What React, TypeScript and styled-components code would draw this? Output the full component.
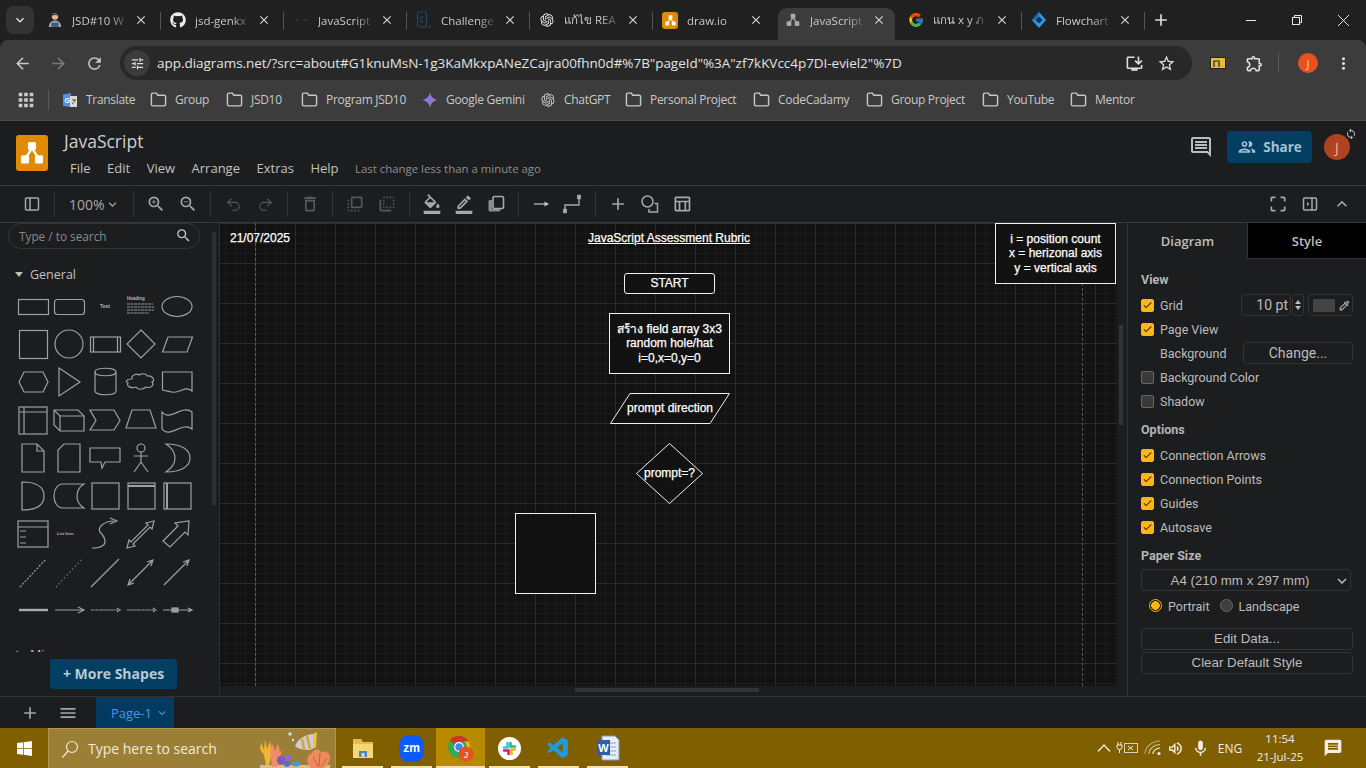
import { FC, ReactNode } from 'react';
import styled, { createGlobalStyle } from 'styled-components';
import { FaGithub, FaWindows } from 'react-icons/fa';
import { FcGoogle } from 'react-icons/fc';
import { VscVscode } from 'react-icons/vsc';
import { RiOpenaiFill } from 'react-icons/ri';
import { Undo2, Redo2 } from 'lucide-react';
import {
  MdAdd,
  MdArrowBack,
  MdArrowForward,
  MdClose,
  MdExpandLess,
  MdExpandMore,
  MdFlipToBack,
  MdFlipToFront,
  MdKeyboardArrowDown,
  MdMenu,
  MdMessage,
  MdOutlineBorderColor,
  MdOutlineComment,
  MdOutlineDelete,
  MdOutlineExtension,
  MdOutlineFormatColorFill,
  MdOutlineGroup,
  MdOutlineInstallDesktop,
  MdOutlineTableChart,
  MdMoreVert,
  MdRefresh,
  MdSearch,
  MdStarBorder,
  MdSync,
  MdTune,
  MdZoomIn,
  MdZoomOut,
  MdCheck,
  MdOutlineColorize,
  MdOutlineVolumeUp,
  MdMic,
  MdCropFree,
  MdApps,
} from 'react-icons/md';
import { FiFolder } from 'react-icons/fi';

const SANS = '"Open Sans", "Noto Sans", "Noto Sans CJK SC", sans-serif';
const ROBOTO = 'Roboto, "Open Sans", sans-serif';
const ARIAL = '"Liberation Sans", "Noto Sans CJK SC", sans-serif';

const GlobalStyle = createGlobalStyle`
  html, body {
    margin: 0;
    width: 1366px;
    height: 768px;
    overflow: hidden;
    background: #1c1d1f;
    font-family: ${SANS};
  }
  * { box-sizing: border-box; }
`;

const Screen = styled.div`
  display: flex;
  flex-direction: column;
  width: 1366px;
  height: 768px;
`;

/* browser chrome */
const TabStrip = styled.div`
  display: flex;
  align-items: flex-end;
  height: 40px;
  background: #202020;
`;

const TabCollapse = styled.div`
  display: flex;
  align-items: center;
  justify-content: center;
  width: 28px;
  height: 28px;
  margin: 0 4px 6px 6px;
  border-radius: 8px;
  background: #333;
  color: #ddd;
  font-size: 16px;
`;

const Tab = styled.div<{ $active?: boolean; $noSep?: boolean }>`
  position: relative;
  display: flex;
  align-items: center;
  width: 123px;
  height: 32px;
  padding: 0 0 8px 9px;
  color: #c9c9c9;
  font-size: 11.5px;
  &::before {
    content: '';
    display: ${(p) => (p.$active ? 'block' : 'none')};
    position: absolute;
    left: 2px;
    right: 4px;
    top: 0;
    bottom: 0;
    border-radius: 9px 9px 0 0;
    background: #3c3c3c;
  }
  &::after {
    content: '';
    display: ${(p) => (p.$active || p.$noSep ? 'none' : 'block')};
    position: absolute;
    right: 0;
    top: 4px;
    height: 18px;
    width: 1px;
    background: #555;
  }
  > * { position: relative; }
`;

const TabIcon = styled.span`
  display: flex;
  align-items: center;
  justify-content: center;
  width: 16px;
  height: 16px;
  font-size: 16px;
  color: #eee;
  flex: none;
`;

const TabTitle = styled.span`
  width: 60px;
  margin-left: 9px;
  white-space: nowrap;
  -webkit-mask-image: linear-gradient(90deg, #000 62%, transparent 96%);
  mask-image: linear-gradient(90deg, #000 62%, transparent 96%);
`;

const TabClose = styled.span`
  display: flex;
  justify-content: center;
  width: 16px;
  font-size: 14px;
  color: #d5d5d5;
  margin-left: 1px;
`;

const NewTab = styled.div`
  display: flex;
  align-items: center;
  justify-content: center;
  width: 32px;
  height: 32px;
  padding-bottom: 8px;
  color: #ddd;
  font-size: 20px;
`;

const WindowControls = styled.div`
  display: flex;
  align-self: stretch;
  margin-left: auto;
`;

const WindowButton = styled.div`
  display: flex;
  align-items: center;
  justify-content: center;
  width: 46px;
  color: #e8e8e8;
`;

const AddressRow = styled.div`
  display: flex;
  align-items: center;
  height: 40px;
  padding: 6px 5px 0 6px;
  background: #3c3c3c;
  border-radius: 8px 8px 0 0;
  color: #c7c7c7;
`;

const NavButton = styled.div<{ $dim?: boolean }>`
  display: flex;
  align-items: center;
  justify-content: center;
  width: 32px;
  margin-right: 4px;
  font-size: 19px;
  color: ${(p) => (p.$dim ? '#7a7a7a' : '#c7c7c7')};
`;

const UrlPill = styled.div`
  display: flex;
  align-items: center;
  width: 1072px;
  height: 34px;
  margin: 0 10px 0 6px;
  padding: 0 10px 0 4px;
  border-radius: 17px;
  background: #282828;
`;

const SiteInfo = styled.div`
  display: flex;
  align-items: center;
  justify-content: center;
  width: 26px;
  height: 26px;
  border-radius: 50%;
  background: #3c3c3c;
  font-size: 15px;
  color: #ddd;
`;

const UrlText = styled.div`
  flex: 1;
  margin-left: 7px;
  font-size: 13.5px;
  letter-spacing: -0.04px;
  color: #e3e3e3;
  white-space: nowrap;
`;

const PillIcon = styled.span<{ $gap?: number }>`
  display: flex;
  justify-content: center;
  width: 32px;
  margin-left: ${(p) => p.$gap ?? 0}px;
  font-size: 19px;
  color: #dedede;
`;

const Divider = styled.span`
  width: 1px;
  height: 20px;
  background: #5a5a5a;
  margin: 0 8px;
`;

const ChromeAvatar = styled.span`
  display: flex;
  align-items: center;
  justify-content: center;
  width: 20px;
  height: 20px;
  margin: 0 9px 0 11px;
  border-radius: 50%;
  background: #e8521f;
  color: #f5d5c5;
  font-size: 11px;
`;

const BookmarkBar = styled.div`
  display: flex;
  align-items: center;
  height: 41px;
  padding: 0 0 1px 16px;
  background: #3c3c3c;
  color: #c9c9c9;
  font-size: 12px;
  letter-spacing: -0.3px;
  border-bottom: 1px solid #4a4a4a;
`;

const AppsIcon = styled.span`
  display: flex;
  font-size: 22px;
  margin-left: -1px;
  color: #c9c9c9;
`;

const BookmarkDivider = styled.span`
  width: 1px;
  height: 20px;
  background: #5a5a5a;
  margin: 0 13px 0 11px;
`;

const Bookmark = styled.div<{ $w: number }>`
  display: flex;
  align-items: center;
  gap: 8px;
  width: ${(p) => p.$w}px;
  white-space: nowrap;
  svg { flex: none; }
`;

/* draw.io header */
const AppHeader = styled.div`
  display: flex;
  height: 65px;
  padding: 14px 16px 0 16px;
  background: #1c1d1f;
  border-bottom: 1px solid #3a3a3a;
`;

const Logo = styled.div`
  display: flex;
  align-items: center;
  justify-content: center;
  width: 32px;
  height: 36px;
  border-radius: 3px;
  background: #e08a05;
`;

const TabLogo = styled(Logo)`
  width: 16px;
  height: 17px;
`;

const TitleBlock = styled.div`
  margin-left: 16px;
  margin-top: -7px;
`;

const DocTitle = styled.div`
  font-size: 17.5px;
  line-height: 26px;
  color: #cfcfcf;
`;

const MenuBar = styled.div`
  display: flex;
  align-items: center;
  height: 26px;
  margin-left: 6px;
  margin-top: 1px;
  gap: 16.5px;
  font-size: 13px;
  color: #c2c2c2;
`;

const LastChange = styled.span`
  font-size: 11.4px;
  color: #8f8f8f;
`;

const HeaderRight = styled.div`
  display: flex;
  align-items: flex-start;
  margin: -1px 0 0 auto;
  color: #bdbdbd;
`;

const CommentIcon = styled.span`
  display: flex;
  font-size: 24px;
  margin: 1px 14px 0 0;
`;

const ShareButton = styled.div`
  display: flex;
  align-items: center;
  justify-content: center;
  gap: 6px;
  width: 85px;
  height: 32px;
  margin-top: -3px;
  border-radius: 4px;
  background: #033e63;
  color: #a8c0d2;
  font-size: 13.5px;
  font-weight: 700;
`;

const Avatar = styled.div`
  position: relative;
  display: flex;
  align-items: center;
  justify-content: center;
  width: 26px;
  height: 26px;
  margin-left: 12px;
  border-radius: 50%;
  background: #b0431f;
  color: #e8b8a0;
  font-size: 14px;
  svg {
    position: absolute;
    top: -6px;
    right: -7px;
    color: #bbb;
  }
`;

const Toolbar = styled.div`
  display: flex;
  align-items: center;
  height: 37px;
  padding-left: 16px;
  background: #1c1d1f;
  border-bottom: 1px solid #3a3a3a;
  color: #a8a8a8;
`;

const ToolButton = styled.div<{ $dim?: boolean }>`
  display: flex;
  align-items: center;
  justify-content: center;
  width: 32px;
  height: 32px;
  font-size: 20px;
  color: ${(p) => (p.$dim ? '#585858' : '#a8a8a8')};
`;

const ToolSep = styled.span`
  width: 1px;
  height: 26px;
  margin: 0 6px;
  background: #333;
`;

const ZoomControl = styled.div`
  display: flex;
  align-items: center;
  width: 66px;
  padding-left: 8px;
  font-size: 14px;
  color: #a8a8a8;
  white-space: nowrap;
`;

const ToolSpacer = styled.div`
  margin-left: auto;
  display: flex;
  padding-right: 8px;
`;

/* main area */
const Main = styled.div`
  display: flex;
  flex: 1;
  min-height: 0;
`;

const Sidebar = styled.aside`
  position: relative;
  display: flex;
  flex-direction: column;
  width: 220px;
  background: #1c1d1f;
  border-right: 1px solid #2d2d2d;
`;

const SidebarThumb = styled.div`
  position: absolute;
  left: 212px;
  top: 9px;
  width: 4px;
  height: 273px;
  background: #2f2f2f;
`;

const SearchBox = styled.div`
  display: flex;
  align-items: center;
  justify-content: space-between;
  width: 192px;
  height: 26px;
  margin: 0 0 0 8px;
  padding: 0 7px 1px 10px;
  border: 1px solid #333;
  border-radius: 13px;
  font-size: 11.8px;
  color: #8a8a8a;
  svg { color: #c0c0c0; }
`;

const PaletteScroll = styled.div`
  flex: 1;
  min-height: 0;
  overflow: hidden;
  padding-left: 15px;
`;

const SectionHead = styled.div`
  display: flex;
  align-items: center;
  height: 22px;
  gap: 7px;
  font-size: 12.5px;
  color: #c0c0c0;
`;

const Caret = styled.span<{ $closed?: boolean }>`
  width: 0;
  height: 0;
  border-left: 4.5px solid transparent;
  border-right: 4.5px solid transparent;
  border-top: 5px solid #c0c0c0;
  transform: ${(p) => (p.$closed ? 'rotate(-90deg)' : 'none')};
`;

const GeneralHead = styled(SectionHead)`
  margin-top: 14px;
`;

const MiscHead = styled(SectionHead)`
  margin-top: 14px;
`;

const PaletteGrid = styled.div`
  display: grid;
  grid-template-columns: repeat(5, 36px);
  grid-auto-rows: 38px;
  margin-top: 2px;
`;

const ShapeSvg = styled.svg`
  display: block;
  width: 36px;
  height: 38px;
  fill: none;
  stroke: #a0a0a0;
  stroke-width: 1.2;
  text {
    fill: #b5b5b5;
    stroke: none;
    font-family: ${ARIAL};
  }
`;

const SidebarFoot = styled.div`
  display: flex;
  height: 44px;
  padding: 7px 0 0 50px;
  background: #1c1d1f;
`;

const MoreShapes = styled.div`
  display: flex;
  align-items: center;
  justify-content: center;
  gap: 4px;
  width: 127px;
  height: 30px;
  padding-bottom: 1px;
  border-radius: 3px;
  background: #033e63;
  color: #b9c9d4;
  font-size: 14px;
  font-weight: 700;
`;

const CanvasColumn = styled.div`
  display: flex;
  flex-direction: column;
  width: 907px;
`;

const CanvasRow = styled.div`
  display: flex;
  flex: 1;
  min-height: 0;
`;

const Canvas = styled.div`
  position: relative;
  flex: 1;
  overflow: hidden;
  background-color: #121212;
  background-image:
    linear-gradient(#2b2b2b 1px, transparent 1px),
    linear-gradient(90deg, #2b2b2b 1px, transparent 1px),
    linear-gradient(#1b1b1b 1px, transparent 1px),
    linear-gradient(90deg, #1b1b1b 1px, transparent 1px);
  background-size: 40px 40px, 40px 40px, 10px 10px, 10px 10px;
  background-position: 0 0, 35px 0, 0 0, 5px 0;
`;

const VGutter = styled.div`
  position: relative;
  width: 10px;
  background: #1c1d1f;
`;

const VThumb = styled.div`
  position: absolute;
  left: 2px;
  top: 102px;
  width: 4px;
  height: 100px;
  background: #333;
`;

const HGutter = styled.div`
  position: relative;
  height: 10px;
  background: #1c1d1f;
`;

const HThumb = styled.div`
  position: absolute;
  left: 355px;
  top: 2px;
  width: 184px;
  height: 4px;
  background: #333;
`;

const PageBreak = styled.div<{ $x: number }>`
  position: absolute;
  left: ${(p) => p.$x}px;
  top: 0;
  bottom: 0;
  border-left: 1px dashed #5a5a5a;
`;

const Node = styled.div<{ $x: number; $y: number; $w: number; $h: number; $box?: boolean; $radius?: number }>`
  position: absolute;
  left: ${(p) => p.$x}px;
  top: ${(p) => p.$y}px;
  width: ${(p) => p.$w}px;
  height: ${(p) => p.$h}px;
  display: flex;
  align-items: center;
  justify-content: center;
  text-align: center;
  font-family: ${ARIAL};
  font-size: 12px;
  line-height: 14.4px;
  color: #fff;
  white-space: nowrap;
  -webkit-text-stroke: 0.25px #fff;
  border: ${(p) => (p.$box ? '1px solid #f0f0f0' : 'none')};
  border-radius: ${(p) => p.$radius ?? 0}px;
  background: ${(p) => (p.$box ? '#121212' : 'transparent')};
`;

const NodeOutline = styled.svg`
  position: absolute;
  inset: 0;
  width: 100%;
  height: 100%;
  fill: #121212;
  stroke: #f0f0f0;
`;

const NodeLabel = styled.span<{ $underline?: boolean }>`
  position: relative;
  text-decoration: ${(p) => (p.$underline ? 'underline' : 'none')};
`;

/* format panel */
const Panel = styled.aside`
  width: 239px;
  background: #1c1d1f;
  border-left: 1px solid #333;
  color: #bcbcbc;
  font-family: ${ROBOTO};
  font-size: 12.5px;
`;

const PanelTabs = styled.div`
  display: flex;
  height: 36px;
`;

const PanelTab = styled.div<{ $active?: boolean }>`
  display: flex;
  align-items: center;
  justify-content: center;
  width: 119px;
  font-family: ${SANS};
  font-size: 13px;
  font-weight: 600;
  color: #bdbdbd;
  background: ${(p) => (p.$active ? '#1c1d1f' : '#000')};
  border-left: ${(p) => (p.$active ? 'none' : '1px solid #333')};
  border-bottom: ${(p) => (p.$active ? 'none' : '1px solid #333')};
`;

const PanelBody = styled.div`
  padding: 9px 13px 0 13px;
`;

const PanelHeading = styled.div<{ $gap?: number; $after?: number }>`
  height: 24px;
  margin-top: ${(p) => p.$gap ?? 0}px;
  margin-bottom: ${(p) => p.$after ?? 0}px;
  line-height: 24px;
  font-size: 12.5px;
  font-weight: 700;
  color: #b5b5b5;
`;

const OptionRow = styled.div`
  display: flex;
  align-items: center;
  gap: 6px;
  height: 24px;
  white-space: nowrap;
`;

const CheckBox = styled.span<{ $on?: boolean }>`
  display: flex;
  align-items: center;
  justify-content: center;
  width: 13px;
  height: 13px;
  border-radius: 2px;
  background: ${(p) => (p.$on ? '#fbb813' : '#3a3a3a')};
  border: 1px solid ${(p) => (p.$on ? '#fbb813' : '#666')};
  color: #222;
  font-size: 12px;
`;

const GridSize = styled.div`
  display: flex;
  align-items: center;
  height: 22px;
  margin-left: auto;
`;

const SizeInput = styled.div`
  width: 50px;
  height: 22px;
  padding-right: 2px;
  border: 1px solid #333;
  border-radius: 4px;
  text-align: right;
  line-height: 20px;
  font-size: 14px;
`;

const Stepper = styled.div`
  display: flex;
  flex-direction: column;
  align-items: center;
  justify-content: center;
  gap: 2px;
  width: 12px;
  height: 22px;
  margin: 0 4px 0 1px;
  border: 1px solid #333;
  border-radius: 3px;
`;

const StepArrow = styled.span<{ $down?: boolean }>`
  width: 0;
  height: 0;
  border-left: 3.5px solid transparent;
  border-right: 3.5px solid transparent;
  border-${(p) => (p.$down ? 'top' : 'bottom')}: 4px solid #bbb;
`;

const ColorButton = styled.div`
  display: flex;
  align-items: center;
  gap: 3px;
  width: 45px;
  height: 22px;
  padding-left: 4px;
  border: 1px solid #333;
  border-radius: 4px;
  color: #aaa;
  font-size: 13px;
`;

const Swatch = styled.span`
  width: 22px;
  height: 13px;
  background: #444;
`;

const BackgroundRow = styled(OptionRow)`
  padding-left: 19px;
  justify-content: space-between;
`;

const ChangeButton = styled.div`
  width: 110px;
  height: 22px;
  border: 1px solid #333;
  border-radius: 4px;
  text-align: center;
  line-height: 20px;
  font-size: 14px;
`;

const PaperSelect = styled.div`
  display: flex;
  align-items: center;
  justify-content: center;
  position: relative;
  width: 210px;
  height: 22px;
  margin-top: 1px;
  border: 1px solid #333;
  border-radius: 4px;
  padding-right: 12px;
  font-family: ${ARIAL};
  font-size: 13.3px;
  svg {
    position: absolute;
    right: -1px;
    top: 2px;
  }
`;

const RadioRow = styled.div`
  display: flex;
  align-items: center;
  height: 25px;
  margin-top: 3px;
  padding-left: 8px;
  font-size: 12.5px;
`;

const Radio = styled.span<{ $on?: boolean }>`
  width: 13px;
  height: 13px;
  margin: -3px 6px 0 0;
  border-radius: 50%;
  border: ${(p) => (p.$on ? '1.5px solid #fbb813' : '1px solid #666')};
  background: ${(p) => (p.$on ? 'radial-gradient(#fbb813 52%, #1c1d1f 58%)' : '#3f3f3f')};
`;

const RadioLabel = styled.span`
  margin-right: 10px;
`;

const PanelButton = styled.div`
  width: 212px;
  height: 22px;
  margin-bottom: 2px;
  border: 1px solid #333;
  border-radius: 4px;
  text-align: center;
  line-height: 20px;
  font-family: ${ARIAL};
  font-size: 13.3px;
  color: #bcbcbc;
`;

const ButtonStack = styled.div`
  margin-top: 9px;
`;

/* bottom bars */
const PageBar = styled.div`
  display: flex;
  height: 32px;
  padding-left: 14px;
  background: #1c1d1f;
  border-top: 1px solid #333;
  color: #a5a5a5;
`;

const PageBarButton = styled.div`
  display: flex;
  align-items: center;
  justify-content: center;
  width: 32px;
  margin-right: 6px;
  font-size: 20px;
`;

const PageTab = styled.div`
  display: flex;
  align-items: center;
  justify-content: flex-end;
  gap: 3px;
  width: 78px;
  margin-left: 6px;
  padding-right: 5px;
  background: #033a5f;
  color: #4d95e0;
  font-size: 13px;
`;

const Taskbar = styled.div`
  display: flex;
  align-items: stretch;
  height: 40px;
  background: #7f5f00;
  color: #fff;
`;

const StartButton = styled.div`
  display: flex;
  align-items: center;
  justify-content: center;
  width: 48px;
  font-size: 17px;
`;

const TaskSearch = styled.div`
  position: relative;
  display: flex;
  align-items: center;
  width: 288px;
  padding-left: 12px;
  background: #9c7f36;
  border: 1px solid #b09650;
  border-bottom: none;
  overflow: hidden;
  font-size: 14px;
  color: #f2ead8;
`;

const SearchArt = styled.svg`
  position: absolute;
  right: 0;
  top: 0;
  width: 80px;
  height: 40px;
`;

const SearchGlass = styled.svg`
  flex: none;
  width: 18px;
  height: 20px;
  margin-right: 9px;
  fill: none;
  stroke: #f2ead8;
  stroke-width: 1.2;
`;

const TaskApp = styled.div<{ $active?: boolean; $running?: boolean }>`
  position: relative;
  display: flex;
  align-items: center;
  justify-content: center;
  width: 49px;
  background: ${(p) => (p.$active ? '#b88a00' : 'transparent')};
  &::after {
    content: '';
    display: ${(p) => (p.$running ? 'block' : 'none')};
    position: absolute;
    left: ${(p) => (p.$active ? 0 : 4)}px;
    right: ${(p) => (p.$active ? 0 : 4)}px;
    bottom: 0;
    height: 2px;
    background: #f3e3b0;
  }
`;

const TaskApps = styled.div`
  display: flex;
  margin-left: 2px;
`;

const ZoomBadge = styled.span`
  display: flex;
  align-items: center;
  justify-content: center;
  width: 25px;
  height: 27px;
  border-radius: 10px;
  background: #0b5cff;
  font-family: ${ARIAL};
  font-weight: 700;
  font-size: 12px;
  color: #fff;
`;

const SlackBadge = styled.span`
  display: flex;
  align-items: center;
  justify-content: center;
  width: 23px;
  height: 23px;
  border-radius: 50%;
  background: #fff;
`;

const Tray = styled.div`
  display: flex;
  align-items: center;
  margin-left: auto;
  padding-right: 5px;
  font-size: 12px;
  color: #f3eee0;
`;

const TrayIcon = styled.span<{ $w: number }>`
  display: flex;
  align-items: center;
  justify-content: center;
  width: ${(p) => p.$w}px;
  font-size: 17px;
`;

const Clock = styled.div`
  width: 50px;
  text-align: center;
  line-height: 18px;
  font-size: 11.5px;
  white-space: nowrap;
`;

const Lang = styled.span`
  width: 28px;
  margin-right: 11px;
  text-align: center;
`;

/* drawings */
const DrawioMark: FC<{ size: number; color?: string }> = ({ size, color = '#fff' }) => (
  <svg width={size} height={size} viewBox="0 0 24 24">
    <path d="M12 8 6 17M12 8l6 9" stroke={color} strokeWidth="2" fill="none" />
    <rect x="8.500" y="2.500" width="7" height="7" rx="1.300" fill={color} />
    <rect x="2.500" y="14" width="7" height="7" rx="1.300" fill={color} />
    <rect x="14.500" y="14" width="7" height="7" rx="1.300" fill={color} />
  </svg>
);

const FolderIcon = () => <FiFolder size={17} color="#c9c9c9" />;

const GeminiIcon = () => (
  <svg width="16" height="16" viewBox="0 0 16 16">
    <defs>
      <linearGradient id="gem" x1="0" y1="0" x2="1" y2="1">
        <stop offset="0" stopColor="#4c8df6" />
        <stop offset="0.6" stopColor="#9b72cb" />
        <stop offset="1" stopColor="#e8604c" />
      </linearGradient>
    </defs>
    <path d="M8 0c.6 4.400 3.400 7.300 8 8-4.600.7-7.400 3.600-8 8-.6-4.400-3.400-7.300-8-8 4.600-.7 7.400-3.600 8-8Z" fill="url(#gem)" />
  </svg>
);

const TranslateIcon = () => (
  <svg width="16" height="16" viewBox="0 0 16 16">
    <path d="M1 2.500 9 1v14l-8-1Z" fill="#4c8df6" />
    <path d="M8 4h7v11H8Z" fill="#d8d8d8" />
    <path d="M10 8h4M12 7v1M13 8c-.5 2-1.500 3-3 4" stroke="#555" fill="none" />
    <text x="2.600" y="10.500" fontSize="7" fontFamily={ARIAL} fill="#fff" fontWeight="700">G</text>
  </svg>
);

const PersonIcon = () => (
  <svg width="18" height="18" viewBox="0 0 18 18">
    <circle cx="9" cy="5" r="3.600" fill="#e3b48f" />
    <path d="M5 4.500C5 1 13 1 13 4.500 11 3 7 3 5 4.500Z" fill="#2b2b2b" />
    <path d="M2 17c0-5 3-7.500 7-7.500s7 2.500 7 7.500Z" fill="#8fa9bd" />
    <rect x="5" y="12" width="8" height="5" fill="#4d5c68" />
  </svg>
);

const CodeTabIcon = () => (
  <svg width="16" height="18" viewBox="0 0 16 18" fill="none" stroke="#1f4a6b" strokeWidth="1.200">
    <rect x="1.500" y="1" width="9" height="15" rx="2" />
    <path d="M7.500 6H5v5h2.500" />
    <path d="M12 16h3" />
  </svg>
);

const DashTabIcon = () => (
  <svg width="16" height="16" viewBox="0 0 16 16" stroke="#1f4a6b" strokeWidth="1.200">
    <path d="M2 8h4M10 8h4" />
  </svg>
);

const FlowchartIcon = () => (
  <svg width="18" height="18" viewBox="0 0 18 18">
    <path d="M9 0 17 9 9 18 1 9Z" fill="#2f97e8" />
    <path d="M9 5 13 9 9 13 5 9Z" fill="#0d2f4a" />
    <path d="M9 0 4 5.500 1 9h3l5-5Z" fill="#1667b8" />
  </svg>
);

const ShadowIcon = () => (
  <svg width="20" height="20" viewBox="0 0 20 20" fill="none" stroke="currentColor">
    <rect x="7" y="2.500" width="10.500" height="12" rx="1.500" strokeWidth="1.600" />
    <path d="M3 6h3v9h8.500v1A1.500 1.500 0 0 1 13 17.500H4A1.500 1.500 0 0 1 2.500 16V7.500Z" fill="currentColor" stroke="none" opacity=".8" />
  </svg>
);

const WaypointIcon = () => (
  <svg width="20" height="20" viewBox="0 0 20 20" fill="none" stroke="currentColor" strokeWidth="1.400">
    <path d="M2 17v-6h14V4" />
    <rect x="0.800" y="15.500" width="2.400" height="3" fill="currentColor" />
    <rect x="14.800" y="1.500" width="2.400" height="3" fill="currentColor" />
  </svg>
);

const ArrowIcon = () => (
  <svg width="20" height="20" viewBox="0 0 20 20" fill="#c5c5c5">
    <path d="M3 9.400h11v1.200H3z" />
    <path d="M13.500 7.500 18 10l-4.500 2.500Z" />
  </svg>
);

const ShapesIcon = () => (
  <svg width="20" height="20" viewBox="0 0 20 20" fill="none" stroke="currentColor" strokeWidth="1.500">
    <circle cx="7.500" cy="7.500" r="5.500" />
    <path d="M14.500 9.500H17.500V18H9v-3" />
  </svg>
);

const LeftPanelIcon = () => (
  <svg width="16" height="16" viewBox="0 0 16 16" fill="none" stroke="currentColor" strokeWidth="1.500">
    <rect x="1.500" y="2" width="13" height="12" rx="1" />
    <path d="M6 2v12" />
  </svg>
);

const RightPanelIcon = () => (
  <svg width="16" height="16" viewBox="0 0 16 16" fill="none" stroke="currentColor" strokeWidth="1.500">
    <rect x="1.500" y="2" width="13" height="12" rx="1" />
    <path d="M10 2v12" />
    <path d="M5 6v4l2.500-2Z" fill="currentColor" stroke="none" />
  </svg>
);

const ExplorerIcon = () => (
  <svg width="24" height="24" viewBox="0 0 24 24">
    <path d="M2 3h8l2 3h10v3H2Z" fill="#e9b949" />
    <path d="M2 8h20v14H2Z" fill="#f7d774" />
    <rect x="8" y="15" width="8" height="6" fill="#3b8bd0" />
    <rect x="10.500" y="17" width="3" height="4" fill="#f7d774" />
  </svg>
);

const ChromeIcon = () => (
  <svg width="28" height="28" viewBox="0 0 28 28">
    <circle cx="12" cy="13" r="11" fill="#3aa757" />
    <path d="M12 2a11 11 0 0 1 9.500 5.500H12a5.500 5.500 0 0 0-5 3L3 6a11 11 0 0 1 9-4Z" fill="#d93025" />
    <path d="M21.500 7.500a11 11 0 0 1-8.500 16.500l4-7a5.500 5.500 0 0 0 0-9.500Z" fill="#fbbc04" />
    <circle cx="12" cy="13" r="4.300" fill="#4285f4" stroke="#fff" strokeWidth="1.200" />
    <circle cx="19" cy="20" r="7.500" fill="#e8521f" />
    <text x="19" y="23.500" textAnchor="middle" fontSize="9" fontFamily={ARIAL} fill="#fff">J</text>
  </svg>
);

const WordIcon = () => (
  <svg width="24" height="26" viewBox="0 0 24 26">
    <path d="M6 1h13l4 4v20H6Z" fill="#e8eef6" stroke="#7d9cc7" />
    <path d="M10 8h10M10 12h10M10 16h10M10 20h10" stroke="#8aa7cf" />
    <rect x="1" y="5" width="13" height="15" fill="#2b5fa8" />
    <text x="7.500" y="16.500" textAnchor="middle" fontSize="11" fontFamily={ARIAL} fontWeight="700" fill="#fff">W</text>
  </svg>
);

const SlackIcon = () => (
  <svg width="15" height="15" viewBox="0 0 15 15" strokeWidth="2.600" strokeLinecap="round" fill="none">
    <path d="M5.500 2v4.500H2" stroke="#36c5f0" />
    <path d="M13 5.500H8.500V2" stroke="#2eb67d" />
    <path d="M9.500 13V8.500H13" stroke="#ecb22e" />
    <path d="M2 9.500h4.500V13" stroke="#e01e5a" />
  </svg>
);

const ExtensionChip = () => (
  <svg width="16" height="12" viewBox="0 0 16 12">
    <rect x="0.500" y="0.500" width="15" height="11" fill="#e8bb3a" stroke="#222" />
    <path d="M4 10V4h5v6M4 4h2" stroke="#222" strokeWidth="1.200" fill="none" />
  </svg>
);

const BatteryIcon = () => (
  <svg width="24" height="14" viewBox="0 0 24 14" fill="none" stroke="#f3eee0">
    <path d="M2 1v3M5 1v3M1 4h5v2a2 2 0 0 1-5 0ZM3.500 8v4" />
    <rect x="8.500" y="2.500" width="13" height="9" opacity="0.800" />
    <path d="M12 5l5 4M17 5l-5 4" />
  </svg>
);

const WifiFan = () => (
  <svg width="18" height="16" viewBox="0 0 18 16" fill="none" stroke="#f3eee0" strokeWidth="1.100">
    <path d="M1 14C1 7 8 1 16 1" opacity=".55" />
    <path d="M5 14c0-5 5-9.500 11-9.500" opacity=".7" />
    <path d="M9 14c0-3 3-6 7-6" />
    <circle cx="15" cy="13.500" r="1.600" fill="#f3eee0" stroke="none" />
  </svg>
);

const TrayChevron = () => (
  <svg width="14" height="8" viewBox="0 0 14 8" fill="none" stroke="#f3eee0" strokeWidth="1.200">
    <path d="M1 7.500 7 1l6 6.500" />
  </svg>
);

const CoralArt = () => (
  <SearchArt viewBox="0 0 80 40">
    <path d="M5 36h70v4H5Z" fill="#e8c9a8" opacity=".8" />
    <path d="M11 36 9 26 5 20l1-7 3 8 1-11 2 10 3-8 1 8 3-3-3 10-2 9Z" fill="#f2b632" />
    <path d="M17 38 15 24l2-11 3 9 3-8 2 9 2-2-3 11-2 6Z" fill="#ef8c6a" />
    <circle cx="26" cy="31" r="4" fill="#7e57c2" />
    <circle cx="33" cy="29" r="3" fill="#8e6ad2" />
    <circle cx="32" cy="35" r="3" fill="#5e6ad2" />
    <ellipse cx="41" cy="35" rx="4" ry="2.500" fill="#3d9bd8" />
    <path d="M40 17c3-7 9-11 18-12l3 13-6 3c-6 0-12-1-15-4Z" fill="#c7cfd6" />
    <path d="M47 10l2 10M52 7l3 13" stroke="#e0a030" strokeWidth="2.500" />
    <path d="M58 5l4-2-1 15-3 1Z" fill="#f0c040" />
    <circle cx="35" cy="5" r="1.800" fill="#bfe3ee" />
    <circle cx="38" cy="11" r="1.200" fill="#bfe3ee" />
    <path d="M56 39c-5-5-5-12 1-15 1-4 7-5 9-1 5-2 10 2 9 7-1 4-3 7-6 9Z" fill="#ee8a5e" />
    <path d="M65 24l-1 14M58 28l5 9M72 29l-6 9" stroke="#c9623d" strokeWidth="1" />
  </SearchArt>
);

const shapes: ReactNode[] = [
  <rect x="3.500" y="12.500" width="30" height="15" />,
  <rect x="3.500" y="12.500" width="30" height="15" rx="3" />,
  <text x="18" y="21" textAnchor="middle" fontSize="5" fontWeight="700">Text</text>,
  <g>
    <text x="4" y="13" fontSize="4.500" fontWeight="700">Heading</text>
    <path d="M4 17h26M4 20h28M4 23h27M4 26h22" strokeDasharray="3 .5" strokeWidth=".9" />
  </g>,
  <ellipse cx="18" cy="19.500" rx="15" ry="10" />,

  <rect x="4.500" y="5.500" width="28" height="28" />,
  <circle cx="18" cy="19" r="14" />,
  <g>
    <rect x="3.500" y="12" width="30" height="15" />
    <path d="M6.500 12v15M30.500 12v15" />
  </g>,
  <path d="M18 5 32 19 18 33 4 19Z" />,
  <path d="M3.500 27 9 12h24.500L28 27Z" />,

  <path d="M4 19 9 9h19l5 10-5 10H9Z" />,
  <path d="M8 5 29 19 8 33Z" />,
  <path d="M8 9c0-5 21-5 21 0v19c0 5-21 5-21 0ZM8 9c0 5 21 5 21 0" />,
  <path d="M9 16c-1-4 5-6 7-4 3-2 8-1 8 1 5-1 9 4 5 6 3 3-2 7-6 5-3 3-8 3-10 0-5 2-10-1-8-4-3-1-2-4 4-4Z" />,
  <path d="M3.500 9H33v19c-8-6-12 3-20 1-4-1-6-1-9.500-2Z" />,

  <g>
    <rect x="4" y="6" width="28" height="27" />
    <path d="M9 6v27M4 11h28" />
  </g>,
  <g>
    <path d="M3 9h24l6 6v15H9l-6-6Z" />
    <path d="M3 9l6 6h24M9 15v15" />
  </g>,
  <path d="M3 9h24l6 10.500L27 29H3l6-9.500Z" />,
  <path d="M3 27 9 9h18l6 18Z" />,
  <path d="M3 11c8 10 20-8 30 0v17c-10-8-22 10-30 0Z" />,

  <g>
    <path d="M7 5h15l7 7v21H7Z" />
    <path d="M22 5v7h7" />
  </g>,
  <path d="M13 5h16v28H7V11Z" />,
  <path d="M3 9h30v14H18l-3 6-1-6H3Z" />,
  <g>
    <circle cx="18" cy="9" r="4" />
    <path d="M18 13v10M11 17h14M18 23l-7 10M18 23l7 10" />
  </g>,
  <path d="M7 5c16 0 24 6 24 14s-8 14-24 14c6-4 9-9 9-14S13 9 7 5Z" />,

  <path d="M7 5c16 0 22 6 22 14S23 33 7 33Z" />,
  <path d="M12 7h21c-5 3-7 7-7 12s2 9 7 12H12C6 31 3 25 3 19S6 7 12 7Z" />,
  <rect x="5" y="6" width="27" height="26" />,
  <g>
    <rect x="5" y="6" width="27" height="26" />
    <path d="M5 9h27" strokeWidth="2" />
  </g>,
  <g>
    <rect x="5" y="6" width="27" height="26" />
    <path d="M8 6v26" strokeWidth="2" />
  </g>,

  <g>
    <rect x="3" y="6" width="30" height="26" />
    <path d="M3 12h30M5 16h6M5 22h6M5 28h6" />
  </g>,
  <text x="6" y="20" fontSize="4" fontWeight="700">List Item</text>,
  <path d="M5 33c20 0 12-12 8-16 -3-6 6-11 14-11M23 3l7 3-7 3" />,
  <path d="M4 33l2-8 2 2 17-17-2-2 8-2-2 8-2-2L10 29l2 2Z" />,
  <path d="M4 26l15-15-3-3 14-2-1 14-3-3L11 32Z" />,

  <path d="M5 34 31 6" strokeDasharray="2 1.500" />,
  <path d="M5 34 31 6" strokeDasharray="1 3" />,
  <path d="M4 34 32 6" />,
  <path d="M5 32 30 7M24 9l6-2-2 6M11 30l-6 2 2-6" />,
  <path d="M5 32 30 7M24 9l6-2-2 6" />,

  <path d="M4 19h29" strokeWidth="2.400" stroke="#aaa" />,
  <path d="M4 19h29M27 16l6 3-6 3" />,
  <path d="M4 19h29M30 17l3 2-3 2" strokeDasharray="2 .5" />,
  <path d="M4 19h29M30 17l3 2-3 2" strokeDasharray="2 .5" />,
  <g>
    <path d="M4 19h29M29 17l4 2-4 2" />
    <rect x="13" y="17" width="6" height="4" fill="#9c9c9c" />
  </g>,
];

const tabs: { title: string; icon: ReactNode; noSep?: boolean; active?: boolean }[] = [
  { title: 'JSD#10 W', icon: <PersonIcon /> },
  { title: 'jsd-genkx', icon: <FaGithub /> },
  { title: 'JavaScript', icon: <DashTabIcon /> },
  { title: 'Challenge', icon: <CodeTabIcon /> },
  { title: 'แก้ไข REA', icon: <RiOpenaiFill /> },
  { title: 'draw.io', icon: <TabLogo><DrawioMark size={13} /></TabLogo>, noSep: true },
  { title: 'JavaScript', icon: <DrawioMark size={16} color="#aaa" />, active: true },
  { title: 'แกน x y ภ', icon: <FcGoogle /> },
  { title: 'Flowchart', icon: <FlowchartIcon /> },
];

const bookmarks: { label: string; w: number; icon: ReactNode }[] = [
  { label: 'Translate', w: 88, icon: <TranslateIcon /> },
  { label: 'Group', w: 76, icon: <FolderIcon /> },
  { label: 'JSD10', w: 75, icon: <FolderIcon /> },
  { label: 'Program JSD10', w: 121, icon: <FolderIcon /> },
  { label: 'Google Gemini', w: 118, icon: <GeminiIcon /> },
  { label: 'ChatGPT', w: 85, icon: <RiOpenaiFill size={16} color="#d0d0d0" /> },
  { label: 'Personal Project', w: 128, icon: <FolderIcon /> },
  { label: 'CodeCadamy', w: 113, icon: <FolderIcon /> },
  { label: 'Group Project', w: 116, icon: <FolderIcon /> },
  { label: 'YouTube', w: 88, icon: <FolderIcon /> },
  { label: 'Mentor', w: 80, icon: <FolderIcon /> },
];

const Check: FC<{ on?: boolean; label: string }> = ({ on, label }) => (
  <OptionRow>
    <CheckBox $on={on}>{on && <MdCheck />}</CheckBox>
    {label}
  </OptionRow>
);

export default function App() {
  return (
    <Screen>
      <GlobalStyle />

      <TabStrip>
        <TabCollapse>
          <MdKeyboardArrowDown />
        </TabCollapse>
        {tabs.map((t, i) => (
          <Tab key={i} $active={t.active} $noSep={t.noSep}>
            <TabIcon>{t.icon}</TabIcon>
            <TabTitle>{t.title}</TabTitle>
            <TabClose>
              <MdClose />
            </TabClose>
          </Tab>
        ))}
        <NewTab>
          <MdAdd />
        </NewTab>
        <WindowControls>
          <WindowButton>
            <svg width="10" height="10" viewBox="0 0 10 10" stroke="#e8e8e8"><path d="M0 5.500h10" /></svg>
          </WindowButton>
          <WindowButton>
            <svg width="10" height="10" viewBox="0 0 10 10" fill="none" stroke="#e8e8e8"><rect x=".5" y="2.500" width="7" height="7" /><path d="M2.500 2.500v-2h7v7h-2" /></svg>
          </WindowButton>
          <WindowButton>
            <svg width="11" height="11" viewBox="0 0 11 11" stroke="#e8e8e8"><path d="M0 0l11 11M11 0 0 11" /></svg>
          </WindowButton>
        </WindowControls>
      </TabStrip>

      <AddressRow>
        <NavButton><MdArrowBack /></NavButton>
        <NavButton $dim><MdArrowForward /></NavButton>
        <NavButton><MdRefresh /></NavButton>
        <UrlPill>
          <SiteInfo><MdTune /></SiteInfo>
          <UrlText>app.diagrams.net/?src=about#G1knuMsN-1g3KaMkxpANeZCajra00fhn0d#%7B"pageId"%3A"zf7kKVcc4p7DI-eviel2"%7D</UrlText>
          <PillIcon><MdOutlineInstallDesktop /></PillIcon>
          <PillIcon><MdStarBorder /></PillIcon>
        </UrlPill>
        <PillIcon><ExtensionChip /></PillIcon>
        <PillIcon $gap={4}><MdOutlineExtension /></PillIcon>
        <Divider />
        <ChromeAvatar>J</ChromeAvatar>
        <PillIcon><MdMoreVert /></PillIcon>
      </AddressRow>

      <BookmarkBar>
        <AppsIcon><MdApps /></AppsIcon>
        <BookmarkDivider />
        {bookmarks.map((b) => (
          <Bookmark key={b.label} $w={b.w}>
            {b.icon}
            {b.label}
          </Bookmark>
        ))}
      </BookmarkBar>

      <AppHeader>
        <Logo><DrawioMark size={28} /></Logo>
        <TitleBlock>
          <DocTitle>JavaScript</DocTitle>
          <MenuBar>
            <span>File</span>
            <span>Edit</span>
            <span>View</span>
            <span>Arrange</span>
            <span>Extras</span>
            <span>Help</span>
            <LastChange>Last change less than a minute ago</LastChange>
          </MenuBar>
        </TitleBlock>
        <HeaderRight>
          <CommentIcon><MdOutlineComment /></CommentIcon>
          <ShareButton><MdOutlineGroup size={20} />Share</ShareButton>
          <Avatar>J<MdSync size={12} /></Avatar>
        </HeaderRight>
      </AppHeader>

      <Toolbar>
        <ToolButton><LeftPanelIcon /></ToolButton>
        <ToolSep />
        <ZoomControl>100% <MdExpandMore size={15} /></ZoomControl>
        <ToolSep />
        <ToolButton><MdZoomIn /></ToolButton>
        <ToolButton><MdZoomOut /></ToolButton>
        <ToolSep />
        <ToolButton $dim><Undo2 size={17} strokeWidth={1.5} /></ToolButton>
        <ToolButton $dim><Redo2 size={17} strokeWidth={1.5} /></ToolButton>
        <ToolSep />
        <ToolButton $dim><MdOutlineDelete /></ToolButton>
        <ToolSep />
        <ToolButton $dim><MdFlipToFront /></ToolButton>
        <ToolButton $dim><MdFlipToBack /></ToolButton>
        <ToolSep />
        <ToolButton><MdOutlineFormatColorFill /></ToolButton>
        <ToolButton><MdOutlineBorderColor /></ToolButton>
        <ToolButton><ShadowIcon /></ToolButton>
        <ToolSep />
        <ToolButton><ArrowIcon /></ToolButton>
        <ToolButton><WaypointIcon /></ToolButton>
        <ToolSep />
        <ToolButton><MdAdd /></ToolButton>
        <ToolButton><ShapesIcon /></ToolButton>
        <ToolButton><MdOutlineTableChart /></ToolButton>
        <ToolSpacer>
          <ToolButton><MdCropFree /></ToolButton>
          <ToolButton><RightPanelIcon /></ToolButton>
          <ToolButton><MdExpandLess /></ToolButton>
        </ToolSpacer>
      </Toolbar>

      <Main>
        <Sidebar>
          <SidebarThumb />
          <SearchBox>
            Type / to search
            <MdSearch size={17} />
          </SearchBox>
          <PaletteScroll>
            <GeneralHead><Caret />General</GeneralHead>
            <PaletteGrid>
              {shapes.map((s, i) => (
                <ShapeSvg key={i} viewBox="0 0 36 38">{s}</ShapeSvg>
              ))}
            </PaletteGrid>
            <MiscHead><Caret $closed />Misc</MiscHead>
          </PaletteScroll>
          <SidebarFoot>
            <MoreShapes>+ More Shapes</MoreShapes>
          </SidebarFoot>
        </Sidebar>

        <CanvasColumn>
          <CanvasRow>
            <Canvas>
              <PageBreak $x={35} />
              <PageBreak $x={862} />
              <Node $x={10} $y={8} $w={60} $h={15}><NodeLabel>21/07/2025</NodeLabel></Node>
              <Node $x={368} $y={8} $w={162} $h={15}><NodeLabel $underline>JavaScript Assessment Rubric</NodeLabel></Node>
              <Node $x={404} $y={50} $w={91} $h={21} $box $radius={3}>START</Node>
              <Node $x={389} $y={90} $w={121} $h={61} $box>
                <span>สร้าง field array 3x3<br />random hole/hat<br />i=0,x=0,y=0</span>
              </Node>
              <Node $x={390} $y={170} $w={120} $h={31}>
                <NodeOutline viewBox="0 0 120 31" preserveAspectRatio="none">
                  <path d="M.5 30.500 20 .5h99.500L100 30.500Z" />
                </NodeOutline>
                <NodeLabel>prompt direction</NodeLabel>
              </Node>
              <Node $x={416} $y={220} $w={67} $h={61}>
                <NodeOutline viewBox="0 0 67 61" preserveAspectRatio="none">
                  <path d="M33.500 .5 66.500 30.500 33.500 60.500 .5 30.500Z" />
                </NodeOutline>
                <NodeLabel>prompt=?</NodeLabel>
              </Node>
              <Node $x={295} $y={290} $w={81} $h={81} $box />
              <Node $x={775} $y={0} $w={121} $h={61} $box>
                <span>i = position count<br />x = herizonal axis<br />y = vertical axis</span>
              </Node>
            </Canvas>
            <VGutter><VThumb /></VGutter>
          </CanvasRow>
          <HGutter><HThumb /></HGutter>
        </CanvasColumn>

        <Panel>
          <PanelTabs>
            <PanelTab $active>Diagram</PanelTab>
            <PanelTab>Style</PanelTab>
          </PanelTabs>
          <PanelBody>
            <PanelHeading $after={1}>View</PanelHeading>
            <OptionRow>
              <CheckBox $on><MdCheck /></CheckBox>
              Grid
              <GridSize>
                <SizeInput>10 pt</SizeInput>
                <Stepper><StepArrow /><StepArrow $down /></Stepper>
                <ColorButton><Swatch /><MdOutlineColorize /></ColorButton>
              </GridSize>
            </OptionRow>
            <Check on label="Page View" />
            <BackgroundRow>
              Background
              <ChangeButton>Change...</ChangeButton>
            </BackgroundRow>
            <Check label="Background Color" />
            <Check label="Shadow" />
            <PanelHeading $gap={5} $after={1}>Options</PanelHeading>
            <Check on label="Connection Arrows" />
            <Check on label="Connection Points" />
            <Check on label="Guides" />
            <Check on label="Autosave" />
            <PanelHeading $gap={5}>Paper Size</PanelHeading>
            <PaperSelect>
              A4 (210 mm x 297 mm)
              <MdKeyboardArrowDown size={18} />
            </PaperSelect>
            <RadioRow>
              <Radio $on />
              <RadioLabel>Portrait</RadioLabel>
              <Radio />
              <span>Landscape</span>
            </RadioRow>
            <ButtonStack>
              <PanelButton>Edit Data...</PanelButton>
              <PanelButton>Clear Default Style</PanelButton>
            </ButtonStack>
          </PanelBody>
        </Panel>
      </Main>

      <PageBar>
        <PageBarButton><MdAdd /></PageBarButton>
        <PageBarButton><MdMenu /></PageBarButton>
        <PageTab>Page-1 <MdExpandMore size={14} /></PageTab>
      </PageBar>

      <Taskbar>
        <StartButton><FaWindows /></StartButton>
        <TaskSearch>
          <SearchGlass viewBox="0 0 18 20">
            <circle cx="11" cy="8" r="5.500" />
            <path d="M7 12 1.500 18.500" />
          </SearchGlass>
          Type here to search
          <CoralArt />
        </TaskSearch>
        <TaskApps>
          <TaskApp $running><ExplorerIcon /></TaskApp>
          <TaskApp $running><ZoomBadge>zm</ZoomBadge></TaskApp>
          <TaskApp $active $running><ChromeIcon /></TaskApp>
          <TaskApp $running><SlackBadge><SlackIcon /></SlackBadge></TaskApp>
          <TaskApp $running><VscVscode size={25} color="#1f9ce0" /></TaskApp>
          <TaskApp $running><WordIcon /></TaskApp>
        </TaskApps>
        <Tray>
          <TrayIcon $w={24}><TrayChevron /></TrayIcon>
          <TrayIcon $w={24}><BatteryIcon /></TrayIcon>
          <TrayIcon $w={26}><WifiFan /></TrayIcon>
          <TrayIcon $w={18}><MdOutlineVolumeUp /></TrayIcon>
          <TrayIcon $w={32}><MdMic size={19} /></TrayIcon>
          <Lang>ENG</Lang>
          <Clock>11:54<br />21-Jul-25</Clock>
          <TrayIcon $w={56}><MdMessage size={20} /></TrayIcon>
        </Tray>
      </Taskbar>
    </Screen>
  );
}
